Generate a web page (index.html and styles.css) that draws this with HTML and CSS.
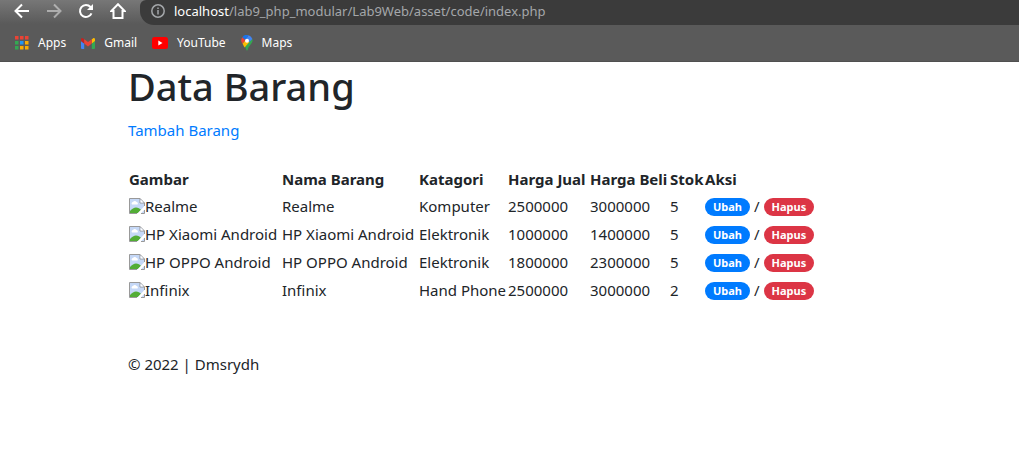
FILE: index.html
```html
<!DOCTYPE html>
<html lang="id">
<head>
<meta charset="utf-8">
<title>Data Barang</title>
<link rel="stylesheet" href="styles.css">
</head>
<body>
<svg class="defs" aria-hidden="true">
  <symbol id="broken" viewBox="0 0 16 16">
    <path d="M.5.5h10.500l4.500 4.500v10.500H.5z" fill="#c5d8f7"/>
    <path d="M3 6.500h5.500a1.500 1.500 0 0 0-1-2.500 2 2 0 0 0-3.500 0A1.500 1.500 0 0 0 3 6.500z" fill="#fff"/>
    <path d="M1 15v-2c2-2 4-3.500 6-3.500s4 1 5 2.500l-3 3z" fill="#52ad36"/>
    <path d="M8 16 16 7.500V11l-4.500 5z" fill="#fff"/>
    <path d="M8 15.500H.5V.5H11L15.500 5v3M11 .5V5h4.500M12 15.500h3.500V12" fill="none" stroke="#999"/>
    <path d="M11.500 1.500v3h3z" fill="#fff"/>
  </symbol>
</svg>
<header class="browser">
  <div class="toolbar">
    <nav class="nav">
      <button class="tool" aria-label="Back"><svg viewBox="0 0 16 16"><path d="M15 8H2M8 1.500 1.500 8 8 14.500"/></svg></button>
      <button class="tool dim" aria-label="Forward"><svg viewBox="0 0 16 16"><path d="M1 8h13M8 1.500 14.500 8 8 14.500"/></svg></button>
      <button class="tool" aria-label="Reload"><svg viewBox="0 0 16 16"><path d="M13.500 10.300A6 6 0 1 1 12.500 4L14 5.500"/><path class="solid" d="M15 1v6H9z"/></svg></button>
      <button class="tool" aria-label="Home"><svg viewBox="0 0 16 16"><path d="M8 1.200 1.300 8H3.500v7h9V8h2.200z"/></svg></button>
    </nav>
    <div class="address">
      <svg class="info" viewBox="0 0 14 14"><circle cx="7" cy="7" r="6.200"/><path d="M7 6v4.500M7 3.500v1.500"/></svg>
      <span class="url"><b class="host">localhost</b>/lab9_php_modular/Lab9Web/asset/code/index.php</span>
    </div>
  </div>
  <nav class="bookmarks">
    <a class="mark" href="#"><svg class="apps" viewBox="0 0 14 14"><path fill="#ea4335" d="M0 0h3.500v3.500H0zM5 0h3.500v3.500H5zM10 0h3.500v3.500H10z"/><path fill="#34a853" d="M0 5h3.500v3.500H0zM0 10h3.500v3.500H0z"/><path fill="#2196f3" d="M5 5h3.500v3.500H5z"/><path fill="#fbab00" d="M10 5h3.500v3.500H10zM5 10h3.500v3.500H5zM10 10h3.500v3.500H10z"/></svg>Apps</a>
    <a class="mark" href="#"><svg class="m" viewBox="0 0 14 11"><path fill="#4285f4" d="M0 3l3.200 2.400V11H1a1 1 0 0 1-1-1z"/><path fill="#34a853" d="M14 3l-3.200 2.400V11H13a1 1 0 0 0 1-1z"/><path fill="#fbbc04" d="M10.800 1.200 12 .4c1-.7 2 0 2 1.100V3l-3.200 2.600z"/><path fill="#c5221f" d="M0 3V1.500C0 .4 1 -.3 2 .4l1.200.8v4.400z"/><path fill="#ea4335" d="M3.200 1.200 7 4l3.800-2.800v4.400L7 8.500 3.200 5.600z"/></svg>Gmail</a>
    <a class="mark" href="#"><svg class="yt" viewBox="0 0 16 12"><rect width="16" height="12" rx="2.500" fill="#f00"/><path fill="#fff" d="M6.300 3.500v5L10.500 6z"/></svg>YouTube</a>
    <a class="mark" href="#"><svg class="pin" viewBox="0 0 12 16"><path fill="#34a853" d="M11.400 4C12.600 8 8 10 6.800 14.500c-.4 1.500-1.200 1.500-1.600 0-.4-1.500-1-2.800-2-4z"/><path fill="#fbbc04" d="M1.500 8.600 5 4.500l3.500 2.500-5 5.500z"/><path fill="#ea4335" d="M1.300 2.200 4.500 5 1.500 8.600C-.2 6.400-.2 4 1.300 2.200z"/><path fill="#1a73e8" d="M1.300 2.200A5.500 5.500 0 0 1 7.700.3L4.500 5z"/><path fill="#4285f4" d="M7.700.3A6 6 0 0 1 11.400 4L8 7.200 5 4.200z"/><circle cx="6" cy="5.700" r="2" fill="#fff"/></svg>Maps</a>
  </nav>
</header>
<main class="container">
  <h1 class="title">Data Barang</h1>
  <a class="add" href="#">Tambah Barang</a>
  <table class="items">
    <colgroup><col class="c-image"><col class="c-name"><col class="c-cat"><col class="c-sell"><col class="c-buy"><col class="c-stock"><col class="c-act"></colgroup>
    <thead><tr><th>Gambar</th><th>Nama Barang</th><th>Katagori</th><th>Harga Jual</th><th>Harga Beli</th><th>Stok</th><th>Aksi</th></tr></thead>
    <tbody>
      <tr><td><span class="pic"><svg><use href="#broken"/></svg>Realme</span></td><td>Realme</td><td>Komputer</td><td>2500000</td><td>3000000</td><td>5</td><td><span class="acts"><a class="badge edit" href="#">Ubah</a>/<a class="badge delete" href="#">Hapus</a></span></td></tr>
      <tr><td><span class="pic"><svg><use href="#broken"/></svg>HP Xiaomi Android</span></td><td>HP Xiaomi Android</td><td>Elektronik</td><td>1000000</td><td>1400000</td><td>5</td><td><span class="acts"><a class="badge edit" href="#">Ubah</a>/<a class="badge delete" href="#">Hapus</a></span></td></tr>
      <tr><td><span class="pic"><svg><use href="#broken"/></svg>HP OPPO Android</span></td><td>HP OPPO Android</td><td>Elektronik</td><td>1800000</td><td>2300000</td><td>5</td><td><span class="acts"><a class="badge edit" href="#">Ubah</a>/<a class="badge delete" href="#">Hapus</a></span></td></tr>
      <tr><td><span class="pic"><svg><use href="#broken"/></svg>Infinix</span></td><td>Infinix</td><td>Hand Phone</td><td>2500000</td><td>3000000</td><td>2</td><td><span class="acts"><a class="badge edit" href="#">Ubah</a>/<a class="badge delete" href="#">Hapus</a></span></td></tr>
    </tbody>
  </table>
  <footer class="footer">© 2022 | Dmsrydh</footer>
</main>
</body>
</html>
```
FILE: styles.css
```css
* { box-sizing: border-box; }
body {
  margin: 0;
  background: #fff;
  color: #212529;
  font: 15px/24px "Noto Sans", "Open Sans", sans-serif;
}
a { text-decoration: none; }
svg { flex: none; }
.defs { display: none; }

.browser {
  height: 62px;
  background: linear-gradient(#777 0, #5a5a5a 24px);
  border-bottom: 1px solid #505050;
}
.toolbar { display: flex; height: 25px; }
.nav { display: flex; gap: 16px; padding: 3px 14px 0 14px; }
.tool { width: 16px; height: 16px; padding: 0; border: 0; background: none; }
.tool svg { display: block; width: 16px; height: 16px; fill: none; stroke: #fff; stroke-width: 2; }
.tool.dim { opacity: 0.45; }
.tool .solid { fill: #fff; stroke: none; }
.address {
  display: flex;
  flex: 1;
  align-items: center;
  gap: 9px;
  padding: 0 0 3px 11px;
  border-radius: 6px 0 0 14px;
  background: #3b3b3b;
  color: #a4a7aa;
  font-size: 13px;
  line-height: 20px;
}
.info { width: 14px; height: 14px; fill: none; stroke: #a4a7aa; stroke-width: 1.5; }
.host { color: #fff; font-weight: 400; }
.bookmarks { display: flex; gap: 15px; padding: 8px 0 0 15px; }
.mark { display: flex; align-items: center; gap: 9px; height: 20px; color: #fff; font-size: 12px; line-height: 20px; }
.apps { width: 14px; height: 14px; }
.m { width: 14px; height: 11px; }
.yt { width: 16px; height: 12px; }
.pin { width: 12px; height: 16px; }

.container { max-width: 793px; margin: 0 auto; padding: 0 15px; }
.title { margin: 0 0 8px; font-size: 38px; font-weight: 500; line-height: 48px; }
.add { display: block; width: max-content; color: #007bff; }
.items { margin-top: 24px; border-collapse: collapse; table-layout: fixed; width: 688px; }
.c-image { width: 153px; }
.c-name { width: 137px; }
.c-cat { width: 89px; }
.c-sell { width: 82px; }
.c-buy { width: 80px; }
.c-stock { width: 35px; }
.items th, .items td { padding: 1px; text-align: left; white-space: nowrap; }
.items th { font-weight: 700; }
.items td { height: 28px; }
.pic { display: flex; align-items: center; }
.pic svg { width: 16px; height: 16px; }
.acts { display: flex; align-items: center; gap: 4px; }
.badge {
  margin-top: 2px;
  padding: 0 8px;
  border-radius: 9px;
  color: #fff;
  font-size: 11px;
  font-weight: 700;
  line-height: 18px;
}
.edit { background: #007bff; }
.delete { background: #dc3545; }
.footer { margin-top: 48px; }
```
